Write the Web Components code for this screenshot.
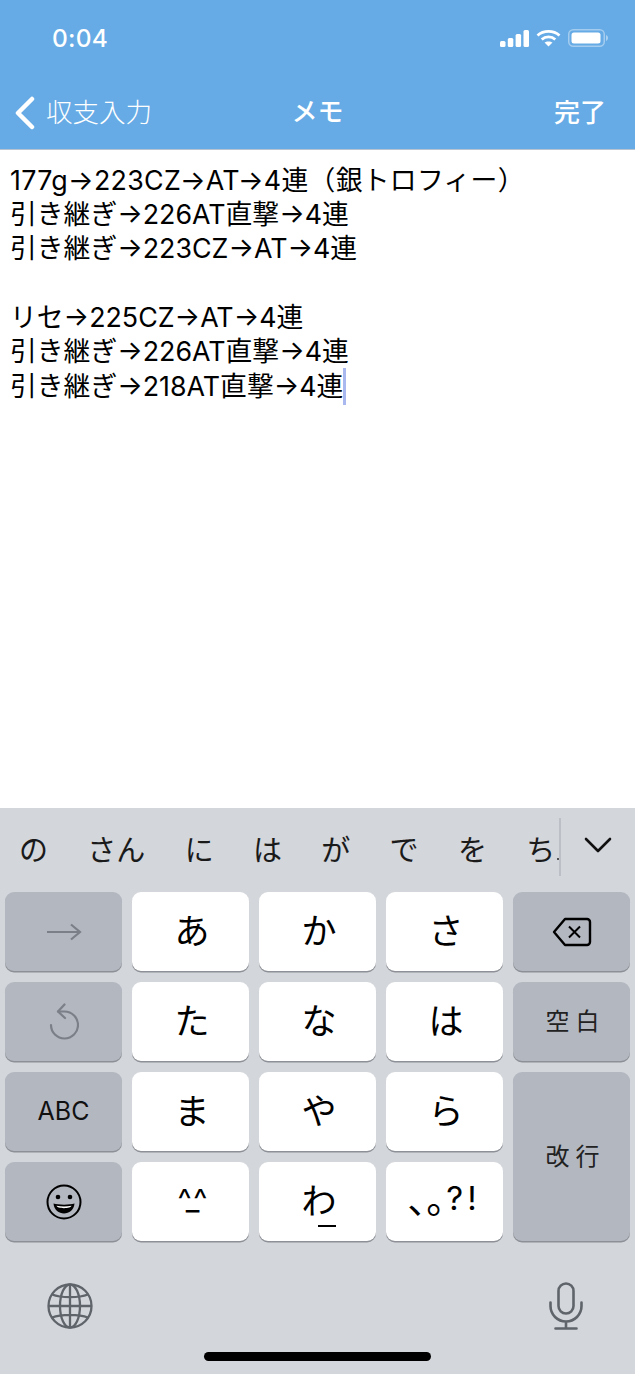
<!DOCTYPE html>
<html lang="ja">
<head>
<meta charset="utf-8">
<title>メモ</title>
<style>
  html,body{ margin:0; padding:0; background:#fff; }
  body{ font-family:Inter,"Noto Sans CJK JP",sans-serif; }
</style>
</head>
<body>
<memo-app>
  <status-bar slot="status" time="0:04"></status-bar>
  <nav-bar slot="nav" back="収支入力" title="メモ" done="完了"></nav-bar>
  <memo-editor slot="editor">
    <div style="letter-spacing:.3px">177g→223CZ→AT→4連（銀トロフィー）</div>
    <div>引き継ぎ→226AT直撃→4連</div>
    <div>引き継ぎ→223CZ→AT→4連</div>
    <div>&nbsp;</div>
    <div>リセ→225CZ→AT→4連</div>
    <div>引き継ぎ→226AT直撃→4連</div>
    <div>引き継ぎ→218AT直撃→4連<memo-caret></memo-caret></div>
  </memo-editor>
  <ime-keyboard slot="keyboard">
    <kb-candidates slot="candidates">
      <span>の</span><span>さん</span><span>に</span><span>は</span><span>が</span><span>で</span><span>を</span><span>ち</span>
    </kb-candidates>

    <kb-key fn>
      <svg width="36" height="20" viewBox="0 0 36 20" fill="none" stroke="#7b7f87" stroke-width="2.2"><path d="M1 10H34M25 2.5 34 10 25 17.5"/></svg>
    </kb-key>
    <kb-key>あ</kb-key>
    <kb-key>か</kb-key>
    <kb-key>さ</kb-key>
    <kb-key fn>
      <svg width="40" height="30" viewBox="0 0 40 30" fill="none" stroke="#000" stroke-width="2.4" stroke-linejoin="round"><path d="M13 2H35a3 3 0 0 1 3 3V25a3 3 0 0 1-3 3H13L2 15Z"/><path d="M17 9.5 28 20.5M28 9.5 17 20.5" stroke-width="2"/></svg>
    </kb-key>

    <kb-key fn>
      <svg width="30" height="37" viewBox="0 0 30 37" fill="none" stroke="#7b7f87" stroke-width="2.2" stroke-linecap="round" stroke-linejoin="round"><path d="M9 8.5H15.5A13.5 13.5 0 1 1 2 22"/><path d="M15.5 1.5 9 8.5 16 15"/></svg>
    </kb-key>
    <kb-key>た</kb-key>
    <kb-key>な</kb-key>
    <kb-key>は</kb-key>
    <kb-key fn small>空白</kb-key>

    <kb-key fn abc>ABC</kb-key>
    <kb-key>ま</kb-key>
    <kb-key>や</kb-key>
    <kb-key>ら</kb-key>
    <kb-key fn small tall>改行</kb-key>

    <kb-key fn>
      <svg width="36" height="36" viewBox="0 0 36 36" fill="none" stroke="#000" stroke-width="2"><circle cx="18" cy="18" r="16.5"/><circle cx="12" cy="13" r="2.3" fill="#000" stroke="none"/><circle cx="24" cy="13" r="2.3" fill="#000" stroke="none"/><path d="M7.5 19.5C12 21 24 21 28.5 19.5 28 26 23 29.5 18 29.5S8 26 7.5 19.5Z" fill="#000" stroke="none"/><path d="M10.5 21.8C15 22.6 21 22.6 25.5 21.8 25 23.5 22 24.2 18 24.2S11 23.5 10.5 21.8Z" fill="#fff" stroke="none"/></svg>
    </kb-key>
    <kb-key face>^_^</kb-key>
    <kb-key underline>わ</kb-key>
    <kb-key punct><span>、。</span><b>?!</b></kb-key>

    <svg slot="globe" width="46" height="46" viewBox="0 0 46 46" fill="none" stroke="#5f646b" stroke-width="2.3"><circle cx="23" cy="23" r="21.5"/><ellipse cx="23" cy="23" rx="10" ry="21.5"/><path d="M23 1.5V44.5M1.5 23H44.5M5 11.5C14 15 32 15 41 11.5M5 34.5C14 31 32 31 41 34.5"/></svg>
    <svg slot="mic" width="34" height="48" viewBox="0 0 34 48" fill="none" stroke="#5f646b" stroke-width="2.6" stroke-linecap="round"><rect x="9.5" y="1.5" width="15" height="30" rx="7.5"/><path d="M1.5 20.5V24a15.5 15.5 0 0 0 31 0V20.5M17 39.5V46M6.5 46.5H27.5"/></svg>
  </ime-keyboard>
</memo-app>

<script>
// small helper so every component gets its own open shadow root
const shadow = (el, html) => {
  el.attachShadow({mode:'open'}).innerHTML = html;
  return el.shadowRoot;
};
const JP = `Inter,"Noto Sans CJK JP",sans-serif`;

customElements.define('memo-app', class extends HTMLElement{
  constructor(){
    super();
    shadow(this, `
      <style>
        :host{ display:flex; flex-direction:column; width:635px; height:1374px; overflow:hidden; background:#fff; }
        .top{ display:block; background:#66abe5; border-bottom:1px solid #b7c4cf; }
        .main{ flex:1; min-height:0; }
      </style>
      <div class="top"><slot name="status"></slot><slot name="nav"></slot></div>
      <div class="main"><slot name="editor"></slot></div>
      <slot name="keyboard"></slot>
    `);
  }
});

customElements.define('status-bar', class extends HTMLElement{
  constructor(){
    super();
    shadow(this, `
      <style>
        :host{ display:flex; align-items:center; justify-content:space-between; height:76px; padding:0 27px 0 52px; box-sizing:border-box; color:#fff; }
        .time{ font:500 24.5px/1 ${JP}; letter-spacing:.2px; }
        .icons{ display:flex; align-items:center; gap:7px; }
        svg{ display:block; }
      </style>
      <span class="time">${this.getAttribute('time')}</span>
      <div class="icons">
        <svg width="29" height="17" viewBox="0 0 29 17" fill="#fff"><rect x="0" y="11" width="5.5" height="6" rx="1.5"/><rect x="7.8" y="8" width="5.5" height="9" rx="1.5"/><rect x="15.6" y="4" width="5.5" height="13" rx="1.5"/><rect x="23.5" y="0" width="5.5" height="17" rx="1.5"/></svg>
        <svg width="25" height="18" viewBox="0 0 25 18" fill="none" stroke="#fff" stroke-width="2.8"><path d="M1.5 6.5C7.5 1 17.5 1 23.5 6.5"/><path d="M5.7 10.5C9.5 7 15.5 7 19.3 10.5"/><path d="M12.5 17.5 8.5 13.5C10.5 12 14.5 12 16.5 13.5Z" fill="#fff" stroke="none"/></svg>
        <svg width="40" height="18" viewBox="0 0 40 18" fill="none"><rect x=".75" y=".75" width="35.5" height="16.5" rx="4.5" stroke="#fff" stroke-opacity=".4" stroke-width="1.5"/><rect x="3.5" y="3.5" width="29" height="11" rx="2.5" fill="#fff"/><path d="M38 6v6c1.2-.4 2-1.6 2-3s-.8-2.6-2-3Z" fill="#fff" fill-opacity=".45"/></svg>
      </div>
    `);
  }
});

customElements.define('nav-bar', class extends HTMLElement{
  constructor(){
    super();
    shadow(this, `
      <style>
        :host{ display:grid; grid-template-columns:1fr auto 1fr; align-items:center; height:73px; padding:0 29px; box-sizing:border-box; color:#fff; font-family:${JP}; }
        .back{ display:flex; align-items:center; gap:11px; margin-left:-14px; font-size:26.5px; font-weight:300; }
        .title{ font-size:26px; font-weight:500; position:relative; top:-1px; }
        .done{ justify-self:end; font-size:26px; font-weight:500; }
        svg{ display:block; }
        span{ line-height:1; }
      </style>
      <div class="back">
        <svg width="20" height="34" viewBox="0 0 20 34" fill="none" stroke="#fff" stroke-width="4.5" stroke-linecap="round" stroke-linejoin="round"><path d="M17 3 3 17 17 31"/></svg>
        <span>${this.getAttribute('back')}</span>
      </div>
      <span class="title">${this.getAttribute('title')}</span>
      <span class="done">${this.getAttribute('done')}</span>
    `);
  }
});

customElements.define('memo-editor', class extends HTMLElement{
  constructor(){
    super();
    shadow(this, `
      <style>
        :host{ display:block; padding:13px 0 0 10px; color:#000; font:400 26.8px/34.2px ${JP}; white-space:nowrap; }
      </style>
      <slot></slot>
    `);
  }
});

customElements.define('memo-caret', class extends HTMLElement{
  constructor(){
    super();
    shadow(this, `
      <style>
        :host{ display:inline-block; width:3px; height:37px; margin-left:0; vertical-align:-9px; background:#a9b9ef; }
      </style>
    `);
  }
});

customElements.define('ime-keyboard', class extends HTMLElement{
  constructor(){
    super();
    shadow(this, `
      <style>
        :host{ display:block; position:relative; height:566px; background:#d3d6db; }
        .keys{ display:grid; grid-template-columns:repeat(5,117px); grid-auto-rows:79px; gap:11px 10px; padding:0 5px; }
        .bottom{ display:flex; justify-content:space-between; align-items:center; padding:0 52px 0 47px; margin-top:41px; }
        .home{ position:absolute; left:204px; top:544px; width:227px; height:9px; border-radius:5px; background:#000; }
      </style>
      <slot name="candidates"></slot>
      <div class="keys"><slot></slot></div>
      <div class="bottom"><slot name="globe"></slot><slot name="mic"></slot></div>
      <div class="home"></div>
    `);
  }
});

customElements.define('kb-candidates', class extends HTMLElement{
  constructor(){
    super();
    shadow(this, `
      <style>
        :host{ display:flex; height:84px; box-sizing:border-box; color:#1a1a1a; font:400 29px/1 ${JP}; }
        .list{ display:flex; gap:39.3px; width:559px; padding:28px 0 0 19px; box-sizing:border-box; position:relative; overflow:hidden; white-space:nowrap; }
        ::slotted(span){ flex:none; }
        .list::after{ content:""; position:absolute; right:0; top:50px; width:2px; height:2px; background:#555; }
        .more{ flex:1; margin-top:10px; height:58px; border-left:2px solid #bcc0c6; display:flex; justify-content:center; padding-top:19px; box-sizing:border-box; }
        svg{ display:block; }
      </style>
      <div class="list"><slot></slot></div>
      <div class="more">
        <svg width="28" height="16" viewBox="0 0 28 16" fill="none" stroke="#111" stroke-width="2.6" stroke-linecap="round" stroke-linejoin="round"><path d="M2 2 14 14 26 2"/></svg>
      </div>
    `);
  }
});

customElements.define('kb-key', class extends HTMLElement{
  constructor(){
    super();
    const under = this.hasAttribute('underline');
    shadow(this, `
      <style>
        :host{ display:flex; align-items:center; justify-content:center; position:relative; box-sizing:border-box; padding-left:3px; border-radius:9px; background:#fff; box-shadow:0 1.5px 0 #8d9096; color:#000; font:400 35px/1 ${JP}; }
        :host([fn]){ background:#b3b7c0; padding-left:0; }
        :host([small]){ font-size:24px; letter-spacing:6px; padding-left:8px; color:#222; }
        :host([abc]){ font-size:25px; color:#111; }
        :host([tall]){ grid-row:span 2; }
        :host([face]){ font-size:30px; letter-spacing:-4px; padding:0 0 6px 0; }
        :host([punct]){ padding:0 1px 0 0; font-size:26px; }
        ::slotted(b){ font-weight:400; font-size:33px; letter-spacing:4px; margin-top:-6px; }
        /* halt keeps both marks half width, so the run stays inside its own box */
        ::slotted(span){ flex:none; font-size:38px; font-feature-settings:"halt"; text-spacing-trim:space-all; margin-right:1px; white-space:nowrap; margin-top:-6px; }
        .under{ position:absolute; left:50%; top:63px; width:18px; height:1.5px; background:#000; }
      </style>
      <slot></slot>${under ? '<span class="under"></span>' : ''}
    `);
  }
});
</script>
</body>
</html>
